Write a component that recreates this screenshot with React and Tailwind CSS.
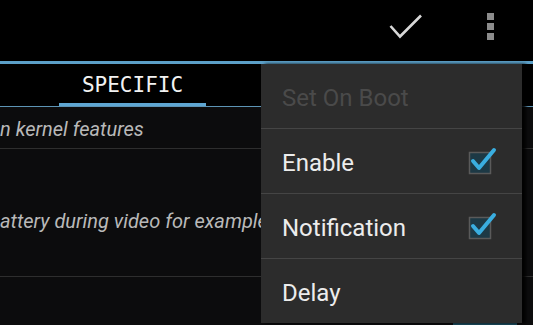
import React from "react";

// Holo overflow menu over a settings screen
function Check() {
  return (
    <svg width="40" height="26" viewBox="0 0 40 26" className="mr-[58px] mt-[-7px]">
      <path d="M1.5 12 L11 22.5 L32 1.5" fill="none" stroke="#d8d8d8" strokeWidth="2.6" />
    </svg>
  );
}

function Dots() {
  return (
    <div className="flex flex-col gap-[3px] mr-[39px] mt-[-8px]">
      <div className="w-[7px] h-[7px] bg-[#8c8c8c]" />
      <div className="w-[7px] h-[7px] bg-[#8c8c8c]" />
      <div className="w-[7px] h-[7px] bg-[#8c8c8c]" />
    </div>
  );
}

function Box() {
  return (
    <svg width="34" height="32" viewBox="0 0 34 32" className="mr-[22px] mt-[-7px]">
      <rect x="3.5" y="9.5" width="21" height="21" fill="#1d3945" stroke="#5a5a5a" strokeWidth="1.5" />
      <path d="M7 18 L13 25 L28 7" fill="none" stroke="#3aaee0" strokeWidth="4" strokeLinecap="round" strokeLinejoin="round" />
    </svg>
  );
}

function Item({ label, disabled, checked, last }) {
  return (
    <>
      <div className="h-[64px] flex items-center justify-between pl-[21px] pt-[3px]">
        <span className={`text-[24px] ${disabled ? "text-[#4a4a4a]" : "text-[#ececec]"}`}>{label}</span>
        {checked && <Box />}
      </div>
      {!last && <div className="h-px bg-[#454545]" />}
    </>
  );
}

export default function App() {
  return (
    <div className="w-[533px] h-[325px] relative overflow-hidden bg-black font-['Roboto',sans-serif]">
      {/* action bar */}
      <div className="h-[61px] flex items-center justify-end">
        <Check />
        <Dots />
      </div>
      <div className="h-[3px] bg-[#5b9fc7]" />

      {/* tabs */}
      <div className="h-[42px] flex">
        <div className="ml-[59px] w-[147px] flex flex-col">
          <div className="flex-1 flex items-center justify-center pt-[4px] text-[21px] text-[#f2f2f2] font-['DejaVu_Sans_Mono',monospace]">
            SPECIFIC
          </div>
          <div className="h-[3px] bg-[#5ea6d2]" />
        </div>
      </div>
      <div className="h-px bg-[#5d94b5]" />

      {/* list */}
      <div className="bg-[#0c0c0d] h-[218px] flex flex-col text-[20px] italic text-[#b9b9b9]">
        <div className="h-[41px] flex items-center pt-[2px] whitespace-nowrap">n kernel features</div>
        <div className="h-px bg-[#2e2e2e]" />
        <div className="h-[127px] flex items-center pt-[16px] whitespace-nowrap">attery during video for example</div>
        <div className="h-px bg-[#2e2e2e]" />
        <div className="flex-1 flex items-end justify-end">
          <div className="w-[64px] h-[4px] mr-[16px] bg-[#1c4c5e]" />
        </div>
      </div>

      {/* overflow menu */}
      <div className="absolute left-[261px] top-[64px] w-[261px] h-[259px] bg-[#2c2c2c] shadow-[4px_0_3px_rgba(0,0,0,0.9)] flex flex-col">
        <Item label="Set On Boot" disabled />
        <Item label="Enable" checked />
        <Item label="Notification" checked />
        <Item label="Delay" last />
      </div>
    </div>
  );
}
